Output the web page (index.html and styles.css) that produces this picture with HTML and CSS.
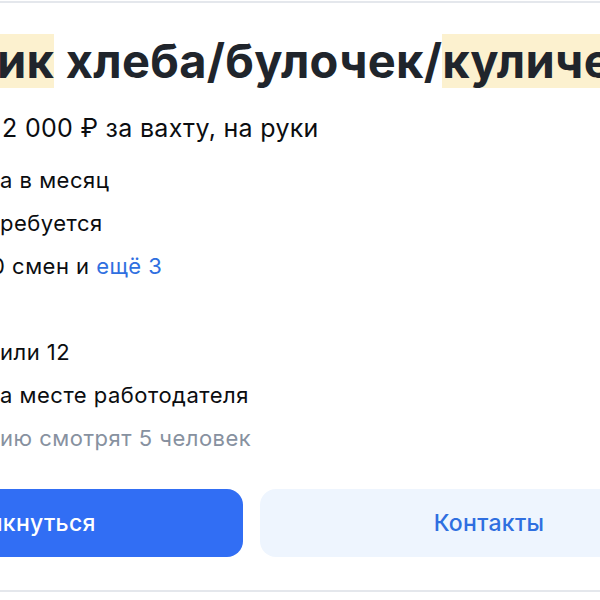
FILE: index.html
```html
<!DOCTYPE html>
<html lang="ru">
<head>
  <meta charset="UTF-8">
  <meta name="viewport" content="width=device-width, initial-scale=1.0">
  <title>Вакансия</title>
  <link rel="stylesheet" href="styles.css">
</head>
<body>
  <div class="card">
    <h1 class="title"><mark class="hl">ик</mark> хлеба/булочек/<mark class="hl">куличей</mark></h1>
    <p class="salary">2 000 ₽ за вахту, на руки</p>
    <ul class="facts">
      <li>а в месяц</li>
      <li>ребуется</li>
      <li class="shift">0 смен и <a href="#" class="more">ещё 3</a></li>
      <li class="empty"></li>
      <li>или 12</li>
      <li>а месте работодателя</li>
      <li class="muted">ию смотрят 5 человек</li>
    </ul>
    <div class="actions">
      <a href="#" class="btn btn-primary">Откликнуться</a>
      <a href="#" class="btn btn-light">Контакты</a>
    </div>
  </div>
</body>
</html>
```

FILE: styles.css
```css
body { margin: 0; background: #fff; font-family: Inter, "Noto Sans", sans-serif; overflow: hidden; }
.card { width: 600px; margin-top: 1px; border-top: 2px solid #e4e7ec; border-bottom: 2px solid #e4e7ec; overflow: hidden; height: 591px; box-sizing: border-box; }
.title { margin: 31px 0 0 -3px; font-size: 47px; line-height: 54px; font-weight: 700; color: #20252c; white-space: nowrap; letter-spacing: 0.3px; }
.hl { display: inline-block; background: #fcf1cf; color: inherit; height: 54px; }
.salary { margin: 24px 0 0 2px; font-size: 25px; line-height: 32px; color: #0b0d10; letter-spacing: 0.3px; }
.facts { list-style: none; margin: 15px 0 0; padding: 0; font-size: 22px; line-height: 43px; color: #0b0d10; letter-spacing: 0.5px; }
.facts .shift { margin-left: -9px; }
.facts .empty { height: 43px; }
.more { color: #2f6fe0; text-decoration: none; }
.muted { color: #8791a0; }
.actions { display: flex; gap: 17px; margin: 29px 0 0 -215px; width: 933px; }
.btn { flex: 1; height: 68px; border-radius: 16px; display: flex; align-items: center; justify-content: center; font-size: 23px; font-weight: 500; letter-spacing: 0.3px; text-decoration: none; }
.btn-primary { background: #316ef4; color: #fff; }
.btn-light { background: #eef5fe; color: #2f6fe0; }
```
